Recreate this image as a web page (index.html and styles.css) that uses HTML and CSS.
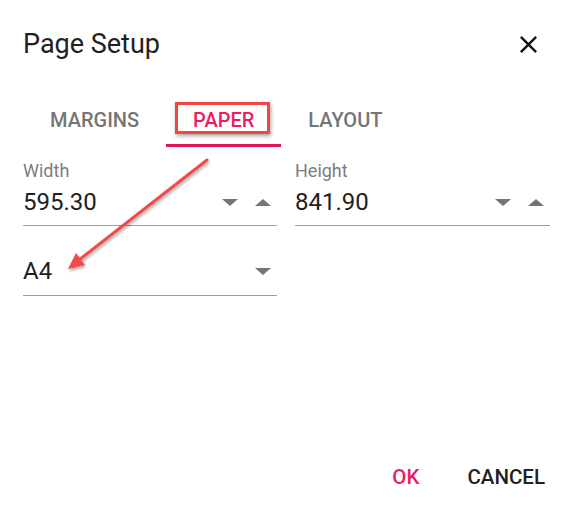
FILE: index.html
```html
<!DOCTYPE html>
<html>
<head>
<meta charset="utf-8">
<link rel="stylesheet" href="styles.css">
</head>
<body>
<div class="dialog">
  <div class="header">
    <div class="title">Page Setup</div>
    <button class="close" aria-label="Close">
      <svg viewBox="5 5 14 14" width="17" height="17"><path d="M19 6.41L17.59 5 12 10.59 6.41 5 5 6.41 10.59 12 5 17.59 6.41 19 12 13.41 17.59 19 19 17.59 13.41 12z" fill="#111"/></svg>
    </button>
  </div>
  <div class="tabs">
    <div class="tab">MARGINS</div>
    <div class="tab active">PAPER<span class="highlight"></span></div>
    <div class="tab">LAYOUT</div>
  </div>
  <div class="fields">
    <div class="field">
      <div class="label">Width</div>
      <div class="control">
        <span class="value">595.30</span>
        <span class="spin">
          <span class="tri down"></span>
          <span class="tri up"></span>
        </span>
      </div>
    </div>
    <div class="field">
      <div class="label">Height</div>
      <div class="control">
        <span class="value">841.90</span>
        <span class="spin">
          <span class="tri down"></span>
          <span class="tri up"></span>
        </span>
      </div>
    </div>
    <div class="field select">
      <div class="control">
        <span class="value">A4</span>
        <span class="spin">
          <span class="tri down"></span>
        </span>
      </div>
    </div>
  </div>
  <div class="footer">
    <button class="btn primary">OK</button>
    <button class="btn">CANCEL</button>
  </div>
  <svg class="arrow" width="572" height="508" viewBox="0 0 572 508">
    <defs>
      <filter id="sh" x="-20%" y="-20%" width="140%" height="140%">
        <feDropShadow dx="1" dy="2" stdDeviation="1.5" flood-color="#000" flood-opacity="0.35"/>
      </filter>
    </defs>
    <g filter="url(#sh)">
      <line x1="207" y1="160" x2="79" y2="260" stroke="#f24848" stroke-width="3" stroke-linecap="round"/>
      <polygon points="68,269 85,265 76,253" fill="#f24848"/>
    </g>
  </svg>
</div>
</body>
</html>
```

FILE: styles.css
```css
* { box-sizing: border-box; }
html, body { margin: 0; padding: 0; background: #fff; }
body {
  width: 572px;
  height: 508px;
  font-family: Roboto, "Liberation Sans", sans-serif;
  color: #212121;
  overflow: hidden;
}
.dialog {
  position: relative;
  height: 508px;
  display: flex;
  flex-direction: column;
}
.header {
  display: flex;
  justify-content: space-between;
  align-items: flex-start;
  padding: 29px 35px 0 23px;
}
.title {
  font-size: 27px;
  line-height: 30px;
  font-weight: 400;
  color: #212121;
}
.close {
  border: 0;
  background: none;
  padding: 0;
  margin-top: 7px;
  width: 17px;
  height: 17px;
  display: flex;
}
.tabs {
  display: flex;
  margin: 38px 0 0 23px;
}
.tab {
  position: relative;
  font-size: 20px;
  line-height: 22px;
  font-weight: 500;
  color: #757575;
  padding: 12px 27px 13px;
  border-bottom: 3px solid transparent;
}
.tab.active {
  color: #e91e63;
  border-bottom-color: #e0165c;
}
.highlight {
  position: absolute;
  left: 9px;
  right: 11px;
  top: 5px;
  bottom: 10px;
  border: 3px solid #f04646;
  box-shadow: 1px 2px 4px rgba(0,0,0,0.35);
}
.fields {
  display: grid;
  grid-template-columns: 254px 255px;
  column-gap: 18px;
  row-gap: 32px;
  padding: 14px 0 0 23px;
}
.label {
  font-size: 18px;
  line-height: 20px;
  color: #7d7d7d;
}
.control {
  display: flex;
  justify-content: space-between;
  align-items: center;
  margin-top: 8px;
  padding-bottom: 10px;
  border-bottom: 1px solid #9e9e9e;
}
.value {
  font-size: 24px;
  line-height: 26px;
  color: #212121;
}
.spin {
  display: flex;
  gap: 17px;
  padding-right: 6px;
}
.tri {
  width: 0;
  height: 0;
  border-left: 8px solid transparent;
  border-right: 8px solid transparent;
}
.tri.down { border-top: 7px solid #757575; }
.tri.up { border-bottom: 7px solid #757575; }
.field.select .control { margin-top: 0; padding-bottom: 11px; }
.footer {
  margin-top: auto;
  display: flex;
  justify-content: flex-end;
  gap: 48px;
  padding: 0 27px 20px 0;
}
.btn {
  border: 0;
  background: none;
  padding: 0;
  font-family: inherit;
  font-size: 20.5px;
  line-height: 22px;
  font-weight: 500;
  color: #212121;
}
.btn.primary { color: #e91e63; }
.arrow {
  position: absolute;
  left: 0;
  top: 0;
  pointer-events: none;
}
```
